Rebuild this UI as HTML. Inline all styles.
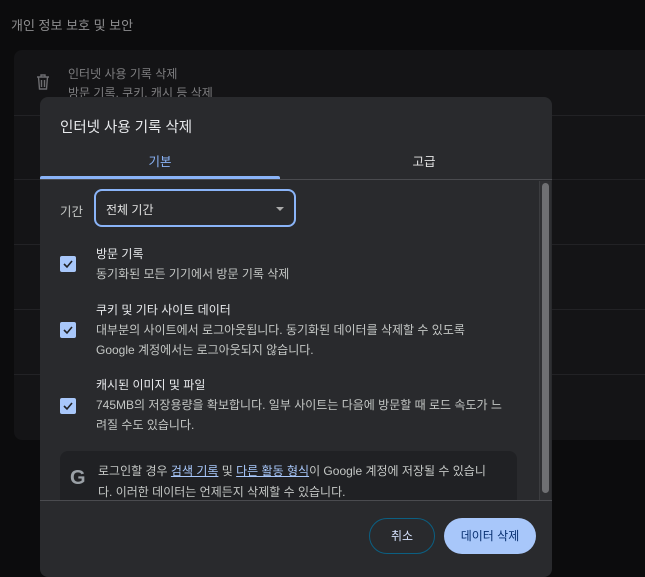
<!DOCTYPE html>
<html><head><meta charset="utf-8"><style>
*{box-sizing:border-box;margin:0;padding:0}
body{width:645px;height:566px;overflow:hidden;background:#0c0c0d;font-family:"Liberation Sans","Noto Sans CJK KR",sans-serif;color:#e3e3e3;position:relative}
.h{position:absolute;left:11px;top:15px;font-size:13px;color:#8d8d8f}
.card{position:absolute;left:14px;top:50px;width:640px;height:390px;background:#141416;border-radius:8px}
.card .ln{position:absolute;left:0;right:0;height:1px;background:#222225}
.bt{position:absolute;left:68px;font-size:12px;color:#7e7e80}
.dlg{position:absolute;left:40px;top:97px;width:512px;height:480px;background:#292a2d;border-radius:8px;overflow:hidden}
.title{position:absolute;left:20px;top:19px;font-size:14.5px;color:#e8eaed}
.tab{position:absolute;top:54px;font-size:12.5px;width:256px;text-align:center}
.ul{position:absolute;left:0;top:79px;width:240px;height:3px;background:#8ab4f8;border-radius:2px 2px 0 0}
.sep{position:absolute;left:0;right:0;height:1px;background:#4a4b4f}
.sc{position:absolute;left:0;top:83px;width:512px;height:320px;overflow:hidden}
.sc>*{margin-top:-83px}
.lbl{position:absolute;left:20px;top:104px;font-size:12.5px;color:#c4c7c5}
.sel{position:absolute;left:54px;top:92px;width:202px;height:38px;border:2px solid #8ab4f8;border-radius:8px;font-size:12px;padding:10px 0 0 10px;color:#e3e3e3}
.sel:after{content:"";position:absolute;right:10px;top:16px;border:4px solid transparent;border-top:4px solid #aaa}
.cb{position:absolute;left:20px;width:16px;height:16px;background:#a8c7fa;border-radius:2px}
.cb svg{position:absolute;left:2px;top:2px}
.it{position:absolute;left:56px;font-size:12px;line-height:20px;color:#c4c7c5}
.it b{font-weight:normal;color:#e8eaed;display:block}
.gbox{position:absolute;left:20px;top:354px;width:457px;height:60px;background:#202124;border-radius:8px}
.gbox .g{position:absolute;left:10px;top:16px;font-size:20px;font-weight:bold;color:#9aa0a6}
.gbox .t{position:absolute;left:38px;top:10px;font-size:12px;line-height:21px;color:#c4c7c5;width:415px}
.gbox a{color:#a8c7fa;text-decoration:underline}
.sb{position:absolute;left:499px;top:84px;width:12px;height:320px;background:#2f3033;border-left:1px solid #3c3d40}
.sb div{position:absolute;left:2px;top:2px;width:7px;height:310px;background:#6f7073;border-radius:4px}
.b1{position:absolute;left:329px;top:421px;width:66px;height:36px;border:1px solid #0b5f82;border-radius:18px;font-size:12px;text-align:center;line-height:34px;color:#d7e3ff}
.b2{position:absolute;left:404px;top:421px;width:92px;height:36px;background:#a8c7fa;border-radius:18px;font-size:12px;text-align:center;line-height:36px;color:#062e6f}
</style></head><body>
<div class="h">개인 정보 보호 및 보안</div>
<div class="card">
<div class="ln" style="top:65px"></div><div class="ln" style="top:129px"></div><div class="ln" style="top:194px"></div><div class="ln" style="top:259px"></div><div class="ln" style="top:324px"></div>
<svg style="position:absolute;left:22px;top:24px" width="14" height="16" viewBox="0 0 14 16"><path d="M1 3h12M5 3V1h4v2M2.5 3l1 12h7l1-12M5.5 6v7M8.5 6v7" stroke="#6d6d70" stroke-width="1.4" fill="none"/></svg>
</div>
<div class="bt" style="top:65px">인터넷 사용 기록 삭제</div>
<div class="bt" style="top:84px">방문 기록, 쿠키, 캐시 등 삭제</div>
<div class="dlg">
<div class="title">인터넷 사용 기록 삭제</div>
<div class="tab" style="left:0;color:#8ab4f8;width:240px">기본</div>
<div class="tab" style="left:256px;color:#e3e3e3">고급</div>
<div class="ul"></div>
<div class="sep" style="top:82px"></div>
<div class="sc"><div style="position:relative;height:500px">
<div class="lbl">기간</div>
<div class="sel">전체 기간</div>
<div class="cb" style="top:159px"><svg width="12" height="12"><path d="M2 6l3 3 5-6" stroke="#202124" stroke-width="1.6" fill="none"/></svg></div>
<div class="it" style="top:147px"><b>방문 기록</b>동기화된 모든 기기에서 방문 기록 삭제</div>
<div class="cb" style="top:225px"><svg width="12" height="12"><path d="M2 6l3 3 5-6" stroke="#202124" stroke-width="1.6" fill="none"/></svg></div>
<div class="it" style="top:203px"><b>쿠키 및 기타 사이트 데이터</b>대부분의 사이트에서 로그아웃됩니다. 동기화된 데이터를 삭제할 수 있도록<br>Google 계정에서는 로그아웃되지 않습니다.</div>
<div class="cb" style="top:301px"><svg width="12" height="12"><path d="M2 6l3 3 5-6" stroke="#202124" stroke-width="1.6" fill="none"/></svg></div>
<div class="it" style="top:278px;width:440px"><b>캐시된 이미지 및 파일</b>745MB의 저장용량을 확보합니다. 일부 사이트는 다음에 방문할 때 로드 속도가 느<br>려질 수도 있습니다.</div>
<div class="gbox"><div class="g">G</div><div class="t">로그인할 경우 <a>검색 기록</a> 및 <a>다른 활동 형식</a>이 Google 계정에 저장될 수 있습니<br>다. 이러한 데이터는 언제든지 삭제할 수 있습니다.</div></div>
</div></div>
<div class="sb"><div></div></div>
<div class="sep" style="top:403px"></div>
<div class="b1">취소</div>
<div class="b2">데이터 삭제</div>
</div>
</body></html>
